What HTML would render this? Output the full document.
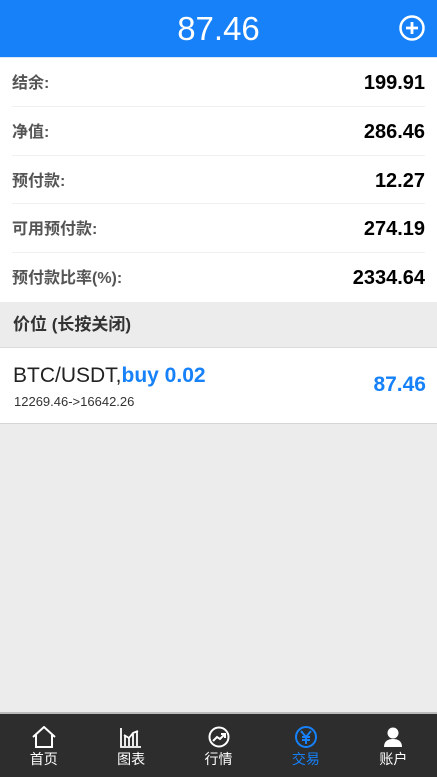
<!DOCTYPE html>
<html><head><meta charset="utf-8"><style>
*{margin:0;padding:0;box-sizing:border-box}
body{width:437px;height:777px;background:#ececec;font-family:"Liberation Sans","Noto Sans CJK SC",sans-serif;position:relative;overflow:hidden}
.hd{height:57px;background:#1681f8;color:#fff;text-align:center;font-size:33px;line-height:57px;position:relative}
.hd svg{position:absolute;right:12px;top:15px}
.info{background:#fff;padding:0 12px;border-top:1px solid #d8e6f8}
.row{height:48.8px;position:relative;border-bottom:1px solid #f0f0f0}
.row:last-child{border-bottom:none}
.row .l{position:absolute;left:0;top:15px;line-height:22px;color:#555;font-weight:bold;font-size:16px}
.row .r{position:absolute;right:0;top:14px;line-height:22px;color:#000;font-weight:bold;font-size:20px}
.sec{height:46px;line-height:46px;padding-left:13px;font-weight:bold;font-size:17px;color:#333;border-bottom:1px solid #ddd}
.pos{background:#fff;height:76px;position:relative;border-bottom:1px solid #d5d5d5}
.pos .t{position:absolute;left:13px;top:16px;font-size:21px;color:#222}
.pos .t b{color:#1681f8}
.pos .s{position:absolute;left:14px;top:46px;font-size:13px;color:#333}
.pos .p{position:absolute;right:11px;top:25px;font-size:21px;font-weight:bold;color:#1681f8}
.nav{position:absolute;left:0;bottom:0;width:437px;height:65px;background:#2d2d2d;border-top:2px solid #bbb;display:flex}
.nav div{flex:1;text-align:center;color:#fff;font-size:14px;padding-top:12px}
.nav div svg{display:block;margin:0 auto 1px}
.nav .a{color:#1681f8}
</style></head><body>
<div class="hd">87.46<svg width="26" height="26" viewBox="0 0 26 26"><circle cx="13" cy="13" r="11.5" fill="none" stroke="#fff" stroke-width="2.5"/><path d="M13 7v12M7 13h12" stroke="#fff" stroke-width="2.8"/></svg></div>
<div class="info">
<div class="row"><span class="l">结余:</span><span class="r">199.91</span></div>
<div class="row"><span class="l">净值:</span><span class="r">286.46</span></div>
<div class="row"><span class="l">预付款:</span><span class="r">12.27</span></div>
<div class="row"><span class="l">可用预付款:</span><span class="r">274.19</span></div>
<div class="row"><span class="l">预付款比率(%):</span><span class="r">2334.64</span></div>
</div>
<div class="sec">价位 (长按关闭)</div>
<div class="pos"><div class="t">BTC/USDT,<b>buy 0.02</b></div><div class="s">12269.46-&gt;16642.26</div><div class="p">87.46</div></div>
<div class="nav">
<div><svg width="24" height="22" viewBox="0 0 24 22"><path d="M1 11L12 1l11 10M4 9v12h16V9" fill="none" stroke="#fff" stroke-width="2"/></svg>首页</div>
<div><svg width="24" height="22" viewBox="0 0 24 22"><path d="M2 2v19h20M6 20V10M10 20V12M14 20V8M18 20V6M5 9l5 3 4-5 5-2" fill="none" stroke="#fff" stroke-width="1.8"/></svg>图表</div>
<div><svg width="24" height="22" viewBox="0 0 24 22"><circle cx="12" cy="11" r="9.5" fill="none" stroke="#fff" stroke-width="2"/><path d="M6 15l4-4 3 2 5-5M14 8h4v4" fill="none" stroke="#fff" stroke-width="2"/></svg>行情</div>
<div class="a"><svg width="24" height="22" viewBox="0 0 24 22"><circle cx="12" cy="11" r="10" fill="none" stroke="#1681f8" stroke-width="2"/><path d="M7 5l5 6 5-6M12 11v7M8 11h8M8 14h8" fill="none" stroke="#1681f8" stroke-width="2"/></svg>交易</div>
<div><svg width="24" height="22" viewBox="0 0 24 22"><circle cx="12" cy="7" r="5.5" fill="#fff"/><path d="M3 21c0-6 4-8 9-8s9 2 9 8z" fill="#fff"/></svg>账户</div>
</div>
</body></html>
